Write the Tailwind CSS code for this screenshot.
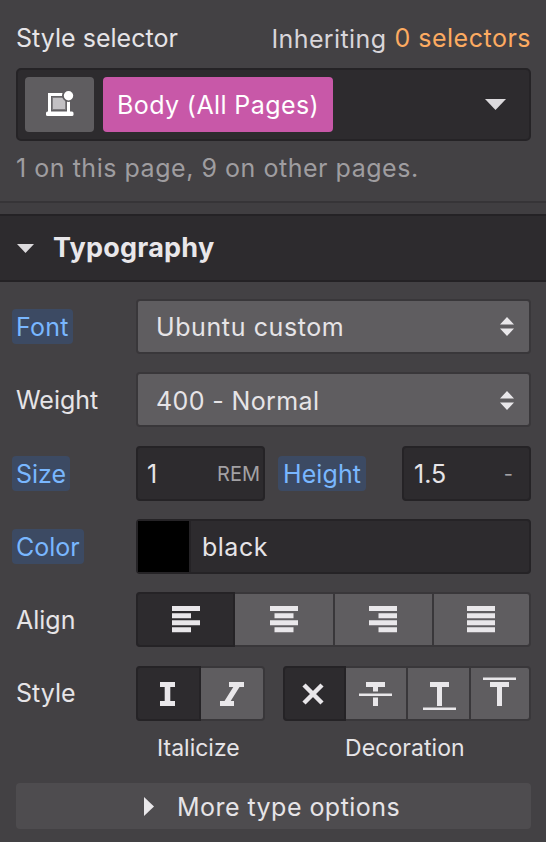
<!DOCTYPE html>
<html lang="en">
<head>
<meta charset="utf-8">
<title>Style panel</title>
<script src="https://cdn.jsdelivr.net/npm/@tailwindcss/browser@4"></script>
</head>
<body class="w-[546px] h-[842px] overflow-hidden bg-[#434144] font-['Inter',sans-serif] text-[25px] leading-[30px] text-[#e6e4e7] whitespace-nowrap">
<section class="h-[201px] px-4 pt-[23px]">
  <div class="flex justify-between h-[30px]">
    <h1 class="tracking-[0.02px]">Style selector</h1>
    <p class="flex gap-[8px] -mr-[1px] text-[#d8d5da]"><span class="pt-px tracking-[0.4px]">Inheriting</span><span class="text-[#fdab61] tracking-[0.5px]">0 selectors</span></p>
  </div>
  <div class="mt-[15px] flex items-center w-[515px] h-[73px] rounded-[5px] border-2 border-[#252326] bg-[#2d2b2e] pl-[7px] pr-[23px]">
    <div class="grid place-items-center w-[69px] h-[55px] rounded-[4px] bg-[#5f5d60]">
      <svg class="relative top-[-1px]" width="30" height="26" viewBox="0 0 30 26">
        <path d="M4.500 21V3.500h19V21" fill="none" stroke="#fff" stroke-width="3"/>
        <path d="M7.500 6.500h13V18.500h-13z" fill="#c2c0c3"/>
        <path d="M7.250 18.500V6.250h13.500V18.500z" fill="none" stroke="#7b797c" stroke-width="1"/>
        <rect x="1" y="20.500" width="27.500" height="4.500" rx="1.500" fill="#fff"/>
        <circle cx="23.500" cy="4.500" r="6.500" fill="#5f5d60"/>
        <circle cx="23.500" cy="4.700" r="4.700" fill="#fff"/>
      </svg>
    </div>
    <div class="ml-[9px] flex items-center w-[230px] h-[55px] pl-[14px] rounded-[4px] bg-[#c858a8] text-white tracking-[0.4px]">Body (All Pages)</div>
    <svg class="ml-auto -mt-px" width="21" height="11" viewBox="0 0 21 11"><path d="M0 0h21L10.500 11z" fill="#dcdadd"/></svg>
  </div>
  <p class="mt-3 text-[#9f9da0] tracking-[0.53px]">1 on this page, 9 on other pages.</p>
</section>
<div class="h-[13px] border-t-2 border-[#363437] bg-[#403e41]"></div>
<header class="flex items-center h-[68px] border-y-2 border-[#242225] bg-[#2d2b2e] pl-[17px]">
  <svg width="17" height="9" viewBox="0 0 17 9"><path d="M0 0h17L8.500 9z" fill="#dcdadd"/></svg>
  <h2 class="ml-[19px] text-[27px] font-bold tracking-[0.22px] text-[#e9e7ea]">Typography</h2>
</header>
<main class="pl-4 pt-[17px]">
  <div class="grid gap-y-[18.400px] grid-cols-[120px_395px] auto-rows-[55px] items-center">
    <div><span class="inline-flex items-center h-[35px] -ml-1 px-1 rounded-[4px] bg-[#3c4a63] text-[#79b7ff] tracking-[0.2px]">Font</span></div>
    <div class="flex items-center justify-between h-[55px] rounded-[4px] border-2 border-[#39373a] bg-[#5f5d60] pl-[18px] pr-[15px]">
      <span class="tracking-[0.6px]">Ubuntu custom</span>
      <svg width="14" height="19" viewBox="0 0 14 19"><path d="M0 7.500 7 0l7 7.500zM0 11.500h14L7 19z" fill="#e9e7ea"/></svg>
    </div>

    <div class="pt-px">Weight</div>
    <div class="flex items-center justify-between h-[55px] rounded-[4px] border-2 border-[#39373a] bg-[#5f5d60] pt-[2px] pl-[18px] pr-[15px]">
      <span class="tracking-[0.38px]">400 - Normal</span>
      <svg width="14" height="19" viewBox="0 0 14 19"><path d="M0 7.500 7 0l7 7.500zM0 11.500h14L7 19z" fill="#e9e7ea"/></svg>
    </div>

    <div class="pt-px"><span class="inline-flex items-center h-[35px] -ml-1 px-1 rounded-[4px] bg-[#3c4a63] text-[#79b7ff]">Size</span></div>
    <div class="flex items-center">
      <div class="flex items-center justify-between w-[129px] h-[55px] rounded-[4px] border-2 border-[#252326] bg-[#2d2b2e] pt-[2px] pl-[9px] pr-[3px]"><span>1</span><span class="text-[20px] text-[#a3a1a4]">REM</span></div>
      <span class="ml-[13px] mt-px flex items-center h-[35px] w-[88px] pl-[5px] rounded-[4px] bg-[#3c4a63] text-[#79b7ff] tracking-[0.1px]">Height</span>
      <div class="ml-auto flex items-center justify-between w-[129px] h-[55px] rounded-[4px] border-2 border-[#252326] bg-[#2d2b2e] pt-[2px] pl-[10px] pr-[16px]"><span>1.5</span><span class="text-[20px] text-[#a3a1a4]">-</span></div>
    </div>

    <div><span class="inline-flex items-center h-[35px] -ml-1 px-1 rounded-[4px] bg-[#3c4a63] text-[#79b7ff]">Color</span></div>
    <div class="flex items-center h-[55px] rounded-[4px] border-2 border-[#252326] bg-[#2d2b2e]">
      <div class="w-[53px] h-[51px] bg-black border-r-2 border-[#252326]"></div><span class="ml-[11px] tracking-[0.5px]">black</span>
    </div>

    <div>Align</div>
    <div class="-mt-[2px] flex h-[55px] rounded-[4px] border-2 border-[#39373a] bg-[#39373a] gap-[2px] text-[#e9e7ea]">
      <div class="grid place-items-center -my-[2px] -ml-[2px] w-[99px] rounded-l-[4px] border-2 border-[#252326] bg-[#2d2b2e] -mr-[2px]"><svg width="28" height="27" viewBox="0 0 28 27"><path fill="currentColor" d="M0 0h28v5H0zM0 7.200h19v5H0zM0 14.200h28v5H0zM0 21.200h19v5H0z"/></svg></div>
      <div class="grid place-items-center w-[98px] bg-[#5f5d60]"><svg width="28" height="27" viewBox="0 0 28 27"><path fill="currentColor" d="M0 0h28v5H0zM4.500 7.200h19v5h-19zM0 14.200h28v5H0zM4.500 21.200h19v5h-19z"/></svg></div>
      <div class="grid place-items-center w-[97px] bg-[#5f5d60] pr-px"><svg width="28" height="27" viewBox="0 0 28 27"><path fill="currentColor" d="M0 0h28v5H0zM9.500 7.200H28v5H9.500zM0 14.200h28v5H0zM9.500 21.200H28v5H9.500z"/></svg></div>
      <div class="grid place-items-center flex-1 rounded-r-[2px] bg-[#5f5d60] pr-px"><svg width="28" height="27" viewBox="0 0 28 27"><path fill="currentColor" d="M0 0h28v5H0zM0 7.200h28v5H0zM0 14.200h28v5H0zM0 21.200h28v5H0z"/></svg></div>
    </div>

    <div>Style</div>
    <div class="flex justify-between text-[#e9e7ea]">
      <div class="flex w-[129px] h-[55px] rounded-[4px] border-2 border-[#39373a] bg-[#5f5d60]">
        <div class="grid place-items-center -my-[2px] -ml-[2px] w-[65px] rounded-l-[4px] border-2 border-[#252326] bg-[#2d2b2e] pr-[2px] pt-px"><svg width="15" height="24" viewBox="0 0 15 24"><path fill="currentColor" d="M0 0h15v5h-4.700v14H15v5H0v-5h4.700V5H0z"/></svg></div>
        <div class="grid place-items-center flex-1 pt-px"><svg width="24" height="24" viewBox="0 0 24 24"><path fill="currentColor" d="M9 0h15v5h-4.500L10.700 19H14v5H0v-5h4.500L13.300 5H9z"/></svg></div>
      </div>
      <div class="flex w-[248px] h-[55px] rounded-[4px] border-2 border-[#39373a] bg-[#39373a] gap-[2px]">
        <div class="grid place-items-center -my-[2px] -ml-[2px] -mr-[2px] w-[63px] rounded-l-[4px] border-2 border-[#252326] bg-[#2d2b2e] pt-px pr-[4px]"><svg width="22" height="22" viewBox="0 0 22 22"><path stroke="currentColor" stroke-width="4.500" d="M2 2l18 18M20 2L2 20"/></svg></div>
        <div class="grid place-items-center w-[60px] bg-[#5f5d60] pt-px pr-px"><svg width="33" height="38" viewBox="0 0 33 38"><path fill="currentColor" d="M7 7h19v5h-7v4.500h-5V12H7zM0 18.500h33v2.500H0zM14 22.500h5V31h-5z"/></svg></div>
        <div class="grid place-items-center w-[61px] bg-[#5f5d60] pt-px pl-[2px]"><svg width="33" height="38" viewBox="0 0 33 38"><path fill="currentColor" d="M7 7h19v5h-7v19h-5V12H7zM0 32.500h33v2.500H0z"/></svg></div>
        <div class="grid place-items-center flex-1 rounded-r-[2px] bg-[#5f5d60] pt-px pr-[2px]"><svg width="33" height="38" viewBox="0 0 33 38"><path fill="currentColor" d="M7 7h19v5h-7v19h-5V12H7zM0 2.500h33v2.500H0z"/></svg></div>
      </div>
    </div>
  </div>
  <div class="mt-3 flex w-[515px] pl-[120px] text-[23px]">
    <div class="w-[129px] pl-[21px]">Italicize</div>
    <div class="ml-[18px] flex-1 pl-[62px] tracking-[0.08px]">Decoration</div>
  </div>
  <div class="mt-5 flex items-center w-[515px] h-[46px] rounded-[4px] bg-[#4e4c4f] pt-[2px] pl-[128px]">
    <svg width="10" height="19" viewBox="0 0 10 19"><path d="M0 0l10 9.500L0 19z" fill="#e9e7ea"/></svg>
    <span class="ml-[23px] tracking-[0.46px]">More type options</span>
  </div>
</main>
</body>
</html>
